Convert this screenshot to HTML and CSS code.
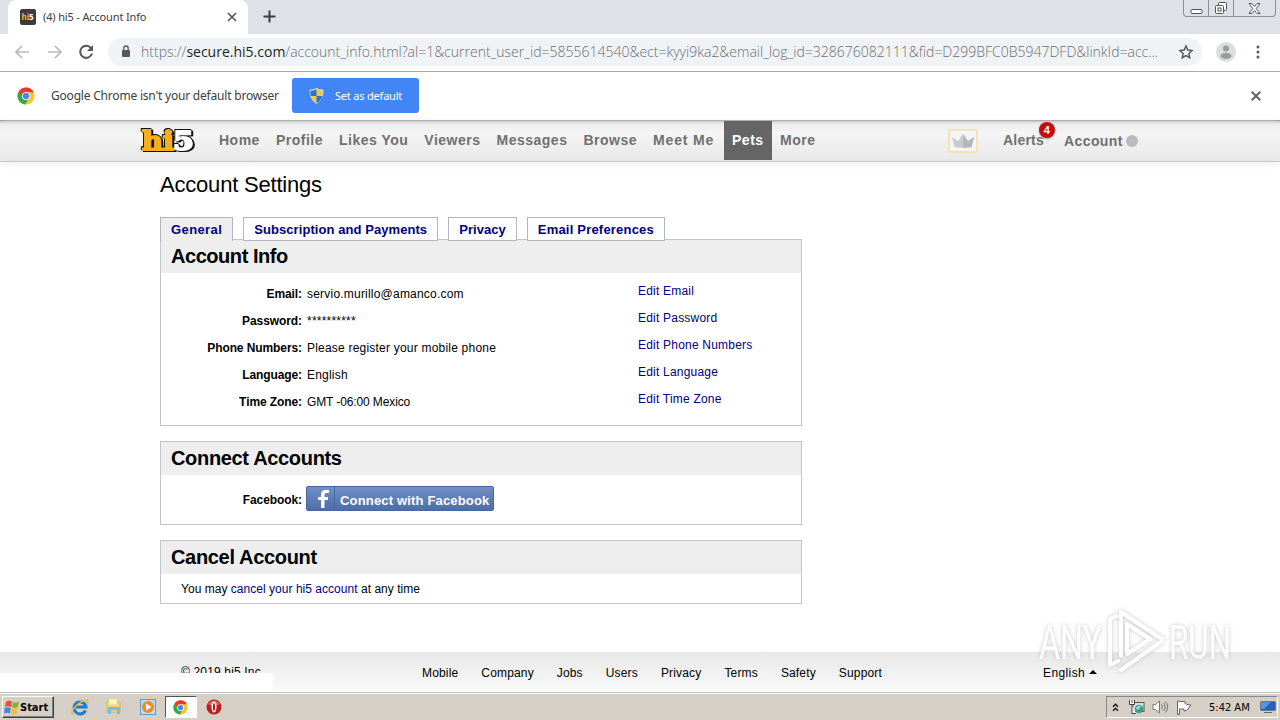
FILE: index.html
```html
<!DOCTYPE html>
<html lang="en">
<head>
    <meta charset="UTF-8">
    <meta name="viewport" content="width=device-width, initial-scale=1.0">
    <title>hi5 - Account Info</title>
    <link rel="stylesheet" href="styles.css">
</head>
<body>
    <svg class="defs" width="0" height="0">
        <symbol id="chrome" viewBox="0 0 20 20">
            <circle cx="10" cy="10" r="9.5" fill="#fbc52d"/>
            <path d="M1.8 5.2A9.5 9.5 0 0 1 18.6 5.8H10L6 12Z" fill="#e33b2e"/>
            <path d="M1.8 5.2A9.5 9.5 0 0 0 9 19.4L13.6 12H6Z" fill="#2da94f"/>
            <circle cx="10" cy="10" r="4.5" fill="#fff"/>
            <circle cx="10" cy="10" r="3.5" fill="#4286f0"/>
        </symbol>
    </svg>

    <!-- Browser window -->
    <div class="tabstrip">
        <div class="browser-tab">
            <svg class="favicon" width="16" height="16" viewBox="0 0 16 16">
                <rect width="16" height="16" rx="2" fill="#3f3b3b"/>
                <text x="1.5" y="11" font-size="8" font-weight="700" fill="#f4b31a">hi<tspan fill="#fff">5</tspan></text>
            </svg>
            <span class="tab-title">(4) hi5 - Account Info</span>
            <svg width="10" height="10" viewBox="0 0 10 10" stroke="#50545a" stroke-width="1.6"><path d="M1 1l8 8M9 1l-8 8"/></svg>
        </div>
        <svg class="new-tab" width="13" height="13" viewBox="0 0 13 13" stroke="#3b3e44" stroke-width="2"><path d="M6.500 .5v12M.5 6.500h12"/></svg>
        <div class="window-buttons">
            <span><svg width="13" height="14" viewBox="0 0 13 14" fill="#fff" stroke="#50555f"><rect x="1" y="8.500" width="11" height="4" rx="1"/></svg></span>
            <span><svg width="14" height="14" viewBox="0 0 14 14" fill="#fff" stroke="#50555f"><rect x="4.500" y="1.500" width="8" height="8" rx="1"/><rect x="1.500" y="4.500" width="8" height="8" rx="1"/><rect x="4" y="7" width="3" height="3"/></svg></span>
            <span><svg width="13" height="11" viewBox="0 0 13 11" fill="#fff" stroke="#50555f"><path d="M1 .5h3l2.500 3 2.500-3h3l-3.800 5 3.800 5H9L6.500 7.500 4 10.500H1l3.800-5z"/></svg></span>
        </div>
    </div>
    <div class="toolbar">
        <svg class="nav-back" width="16" height="14" viewBox="0 0 16 14" fill="none" stroke="#b8babd" stroke-width="1.7"><path d="M15 7H2M8 1L2 7l6 6"/></svg>
        <svg class="nav-forward" width="16" height="14" viewBox="0 0 16 14" fill="none" stroke="#b8babd" stroke-width="1.7"><path d="M1 7h13M8 1l6 6-6 6"/></svg>
        <svg class="nav-reload" width="16" height="16" viewBox="0 0 16 16" fill="none" stroke="#55585c" stroke-width="2"><path d="M13 4.200A6 6 0 1 0 14 9.500"/><path d="M15 1v6H9z" fill="#55585c" stroke="none"/></svg>
        <div class="address">
            <svg class="lock" width="10" height="13" viewBox="0 0 10 13"><rect x="1" y="5" width="8" height="7" rx="1" fill="#55585c"/><path d="M2.800 5V3.200a2.200 2.200 0 0 1 4.400 0V5" fill="none" stroke="#55585c" stroke-width="1.300"/></svg>
            <span class="url">https://<b>secure.hi5.com</b>/account_info.html?al=1&amp;current_user_id=5855614540&amp;ect=kyyi9ka2&amp;email_log_id=328676082111&amp;fid=D299BFC0B5947DFD&amp;linkId=acc...</span>
            <svg class="star" width="16" height="16" viewBox="0 0 16 16" fill="none" stroke="#55585c" stroke-width="1.500"><path d="M8 2l1.800 4 4.200.5-3.100 2.900.8 4.300L8 11.500l-3.700 2.200.8-4.300L2 6.500 6.200 6z"/></svg>
        </div>
        <svg class="avatar" width="20" height="20" viewBox="0 0 20 20"><circle cx="10" cy="10" r="10" fill="#dcdddd"/><circle cx="10" cy="6.500" r="3" fill="#9a9c9e"/><ellipse cx="10" cy="13.800" rx="5.500" ry="3" fill="#9a9c9e"/></svg>
        <svg class="menu" width="4" height="14" viewBox="0 0 4 14" fill="#55585c"><circle cx="2" cy="2" r="1.500"/><circle cx="2" cy="7" r="1.500"/><circle cx="2" cy="12" r="1.500"/></svg>
    </div>
    <div class="infobar">
        <svg class="infobar-logo" width="18" height="18"><use href="#chrome"/></svg>
        <span class="infobar-text">Google Chrome isn't your default browser</span>
        <div class="default-btn">
            <svg width="15" height="16" viewBox="0 0 15 16"><path d="M7.500.5Q10 2 14 2q.5 9-6.500 13.500Q.5 11 1 2q4 0 6.500-1.500z" fill="#f6c944" stroke="#d8dde0"/><path d="M7.500 1.500V8H1.600Q1.300 5 1.500 2.700q3.500 0 6-1.200zM7.500 8h5.800q-1 4.500-5.800 7z" fill="#2b73d2"/></svg>
            <span>Set as default</span>
        </div>
        <svg class="infobar-close" width="10" height="10" viewBox="0 0 10 10" stroke="#606368" stroke-width="2"><path d="M.7.7l8.600 8.600M9.300.7L.7 9.300"/></svg>
    </div>

    <!-- Site header -->
    <div class="site-header">
        <svg class="logo" width="58" height="32" viewBox="0 0 58 32">
            <text class="logo-hi" x="3" y="25" textLength="32" lengthAdjust="spacingAndGlyphs">hi</text>
            <text class="logo-five" x="34" y="25" textLength="21" lengthAdjust="spacingAndGlyphs">5</text>
        </svg>
        <div class="nav">
            <a>Home</a>
            <a>Profile</a>
            <a>Likes You</a>
            <a>Viewers</a>
            <a>Messages</a>
            <a>Browse</a>
            <a class="meet">Meet Me</a>
            <a class="active">Pets</a>
            <a>More</a>
        </div>
        <div class="crown">
            <svg width="22" height="14" viewBox="0 0 22 14" fill="#c9caca"><path d="M0 3l6 4 5-7 5 7 6-4-2.500 10q-8 1.500-17 0z"/><path d="M11 0l5 7 6-4-2.500 10q-4 .8-8.500.9z" fill="#b4b6b8"/></svg>
        </div>
        <div class="alerts">Alerts<span class="badge">4</span></div>
        <div class="account">Account<i class="dot"></i></div>
    </div>

    <!-- Account settings -->
    <div class="content">
        <h1>Account Settings</h1>
        <div class="tabs">
            <a class="tab selected">General</a>
            <a class="tab subscription">Subscription and Payments</a>
            <a class="tab privacy">Privacy</a>
            <a class="tab">Email Preferences</a>
        </div>
        <div class="panel info">
            <h2>Account Info</h2>
            <div class="row"><b>Email:</b><span>servio.murillo@amanco.com</span><a>Edit Email</a></div>
            <div class="row"><b>Password:</b><span>**********</span><a>Edit Password</a></div>
            <div class="row"><b>Phone Numbers:</b><span>Please register your mobile phone</span><a>Edit Phone Numbers</a></div>
            <div class="row"><b>Language:</b><span>English</span><a>Edit Language</a></div>
            <div class="row"><b>Time Zone:</b><span class="zone">GMT -06:00 Mexico</span><a>Edit Time Zone</a></div>
        </div>
        <div class="panel connect">
            <h2>Connect Accounts</h2>
            <div class="row"><b>Facebook:</b>
                <div class="fb-btn">
                    <span class="fb-icon"><svg width="11" height="18" viewBox="0 0 11 18"><path d="M3 18v-8H0V7h3V4.500Q3 0 7.500 0H11v3H8.500Q6.500 3 6.500 5v2H10v3H6.500v8z" fill="#fff"/></svg></span>
                    <span class="fb-label">Connect with Facebook</span>
                </div>
            </div>
        </div>
        <div class="panel cancel">
            <h2>Cancel Account</h2>
            <p>You may <a>cancel your hi5 account</a> at any time</p>
        </div>
    </div>

    <div class="footer">
        <span class="copyright">© 2019 hi5 Inc.</span>
        <div class="footer-links">
            <a>Mobile</a><a>Company</a><a>Jobs</a><a>Users</a><a>Privacy</a><a>Terms</a><a>Safety</a><a>Support</a>
        </div>
        <span class="language">English <i class="arrow"></i></span>
        <div class="status-bubble"></div>
    </div>

    <!-- Windows taskbar -->
    <div class="taskbar">
        <div class="start">
            <svg width="16" height="15" viewBox="0 0 16 15"><path d="M2 2q3-2 6-.5L7 7q-3-1.500-6 0z" fill="#e8512e"/><path d="M9 2q3 1.500 6-.5l-1.200 5.500q-3 1.800-5.800.3z" fill="#78b72f"/><path d="M.8 8q3-1.500 6 0l-1 5.500q-3-1.500-5.800 0z" fill="#3d8ade"/><path d="M7.800 8.300q3 1.500 5.800-.3l-1.200 5.500q-3 1.700-5.700.3z" fill="#f5be2c"/></svg>
            <span>Start</span>
        </div>
        <div class="task-icon">
            <svg width="18" height="18" viewBox="0 0 18 18" fill="none"><path d="M14.500 12.500A6 6 0 1 1 15 9H5" stroke="#1c7cc9" stroke-width="3"/><path d="M2 16Q-1 13 6 7T16.500 2.500q1 1-.5 3" stroke="#e6bd38" stroke-width="1.500"/></svg>
        </div>
        <div class="task-icon">
            <svg width="18" height="18" viewBox="0 0 18 18"><path d="M2 3h5l1 1h7v10H2z" fill="#efd675" stroke="#d8b852"/><path d="M4 1.500h8v5H4z" fill="#fff3b8"/><path d="M3 16V9h12v7h-3v-4H6v4z" fill="#73bde6"/></svg>
        </div>
        <div class="task-icon">
            <svg width="16" height="16" viewBox="0 0 16 16"><rect x=".5" y=".5" width="15" height="15" fill="#bcdcf2" stroke="#5b9dd0"/><circle cx="8" cy="8" r="6" fill="#f18b1b"/><path d="M6 4.500l5.500 3.500L6 11.500z" fill="#fff"/></svg>
        </div>
        <div class="task-icon current"><svg width="15" height="15"><use href="#chrome"/></svg></div>
        <div class="task-icon">
            <svg width="16" height="16" viewBox="0 0 16 16"><circle cx="8" cy="8" r="7.500" fill="#bd1d20"/><path d="M2 5q6-7 12 0-6 3-12 0z" fill="#df7072"/><ellipse cx="8" cy="8" rx="2.500" ry="5.500" fill="#fff"/><ellipse cx="8" cy="8" rx="1" ry="4" fill="#9d1517"/></svg>
        </div>
        <div class="tray">
            <svg class="chevrons" width="7" height="9" viewBox="0 0 7 9" fill="none" stroke="#111" stroke-width="1.300"><path d="M1 3.700L3.500 1.200 6 3.700M1 7.700l2.500-2.500L6 7.700"/></svg>
            <svg class="network" width="17" height="16" viewBox="0 0 17 16"><rect x="5" y="3.500" width="11" height="9" fill="#cfe8e0" stroke="#555"/><path d="M1.500 1v4.500h5V1M4 1v3M4 5.500v9h4" fill="#fff" stroke="#444"/><circle cx="11" cy="10" r="4.300" fill="#3a9d8b"/><path d="M8 9q2-3 5-2l-2 3q-2 2-3-1z" fill="#a6dccb"/></svg>
            <svg class="volume" width="17" height="14" viewBox="0 0 17 14" fill="none" stroke="#777"><path d="M1 4.500h2.500L7.500 1v12L3.500 9.500H1z" fill="#fff"/><path d="M9.500 4.500q2 2.500 0 5M11.500 3q3.500 4 0 8M13.500 1.500q4.500 5.500 0 11"/></svg>
            <svg class="flag" width="16" height="15" viewBox="0 0 16 15" fill="#fff" stroke="#666"><path d="M1.500 1v13.500h2V9H8v2q3 0 4-2 1-2 3-4-3 0-6-1.500V1.500H3.500V1z"/></svg>
            <span class="clock">5:42 AM</span>
            <svg class="desktop" width="16" height="13" viewBox="0 0 16 13"><rect x=".5" y=".5" width="15" height="9" rx="1" fill="#255fc1" stroke="#6c7583"/><path d="M1 1h10L4 8H1z" fill="#5595dd"/><path d="M4 11.500h8" stroke="#667"/></svg>
        </div>
    </div>

    <svg class="watermark" width="230" height="80" viewBox="0 0 230 80">
        <text x="9" y="59" textLength="63" lengthAdjust="spacingAndGlyphs">ANY</text>
        <path d="M80 65V19l7-3M80 65l8-4M91 56V12l41 27M91 70l41-29M97 24v30l23-15z"/>
        <text x="139" y="59" textLength="62" lengthAdjust="spacingAndGlyphs">RUN</text>
    </svg>
</body>
</html>
```
FILE: styles.css
```css
* {
    margin: 0;
    padding: 0;
    box-sizing: border-box;
}

body {
    width: 1280px;
    height: 720px;
    overflow: hidden;
    position: relative;
    display: flex;
    flex-direction: column;
    background: #fff;
    font-family: "Liberation Sans", Arial, sans-serif;
    font-size: 12px;
    color: #000;
}

svg {
    display: block;
    flex-shrink: 0;
}

span, a, b {
    white-space: nowrap;
}

.defs {
    position: absolute;
}

/* browser window */
.tabstrip {
    height: 34px;
    flex-shrink: 0;
    display: flex;
    background: #dee1e7;
    font-family: "Noto Sans", sans-serif;
}

.browser-tab {
    width: 240px;
    margin-left: 8px;
    padding: 0 11px 1px 12px;
    display: flex;
    align-items: center;
    background: #fff;
    border-radius: 8px 8px 0 0;
}

.tab-title {
    flex: 1;
    margin-left: 7px;
    font-size: 11px;
    letter-spacing: -0.15px;
    color: #3d4045;
}

.new-tab {
    margin: 10px 0 0 15px;
}

.window-buttons {
    width: 93px;
    height: 17px;
    margin: 0 4px 0 auto;
    display: flex;
    border: 1px solid #8b8f96;
    border-top: none;
    border-radius: 0 0 4px 4px;
}

.window-buttons span {
    display: flex;
    justify-content: center;
    align-items: center;
    width: 25px;
    border-right: 1px solid #8b8f96;
}

.window-buttons span:last-child {
    flex: 1;
    border: none;
}

.toolbar {
    height: 38px;
    flex-shrink: 0;
    display: flex;
    align-items: center;
    padding: 0 20px 2px 14px;
    border-bottom: 1px solid #a9abae;
    font-family: "Open Sans", sans-serif;
}

.nav-forward {
    margin-left: 17px;
}

.nav-reload {
    margin-left: 15px;
}

.address {
    width: 1094px;
    height: 28px;
    margin-left: 14px;
    padding: 0 8px 0 13px;
    display: flex;
    align-items: center;
    background: #f0f3f5;
    border-radius: 14px;
}

.url {
    flex: 1;
    margin-left: 10px;
    font-size: 14px;
    font-weight: 300;
    color: #6b6e72;
}

.url b {
    font-weight: 400;
    color: #1d1f22;
}

.avatar {
    margin-left: 14px;
}

.menu {
    margin-left: auto;
}

.infobar {
    height: 49px;
    flex-shrink: 0;
    display: flex;
    align-items: center;
    padding: 0 19px 1px 17px;
    border-bottom: 1px solid #8b8b8b;
    font-family: "Noto Sans", sans-serif;
}

.infobar-text {
    width: 228px;
    margin-left: 16px;
    font-size: 12px;
    letter-spacing: -0.2px;
    color: #3b3d40;
}

.default-btn {
    width: 127px;
    height: 35px;
    margin-left: 13px;
    padding-left: 17px;
    display: flex;
    align-items: center;
    gap: 11px;
    background: #4285f4;
    border-radius: 3px;
    color: #fff;
    font-size: 11px;
    letter-spacing: -0.2px;
}

.infobar-close {
    margin-left: auto;
}

/* site header */
.site-header {
    height: 41px;
    flex-shrink: 0;
    display: flex;
    padding-left: 139px;
    background: linear-gradient(#c9c9c9, #ededed 3px, #f5f5f5 12px, #e8e8e8);
    border-bottom: 1px solid #c8c8c8;
    box-shadow: 0 1px 8px #eee;
    color: #707070;
    font-size: 14px;
    font-weight: bold;
    letter-spacing: 0.5px;
}

.logo {
    margin-top: 4px;
    overflow: visible;
    filter: drop-shadow(1px 1px 0 #111) drop-shadow(-1px -1px 0 #111) drop-shadow(1px 0 0 #111);
}

.logo-hi, .logo-five {
    font: bold 26px "DejaVu Serif", serif;
    letter-spacing: 0;
    fill: #f9ae1c;
    stroke: #f9ae1c;
    stroke-width: 2px;
}

.logo-five {
    fill: #fff;
    stroke: #fff;
}

.nav {
    width: 637px;
    margin-left: 14px;
    display: flex;
}

.nav a {
    height: 39px;
    padding: 0 8px;
    line-height: 38px;
}

.nav .meet {
    width: 79px;
    flex-shrink: 0;
    letter-spacing: 0.85px;
}

.nav .active {
    width: 48px;
    background: #656565;
    color: #fff;
}

.crown {
    width: 30px;
    height: 24px;
    margin: 8px 0 0 100px;
    display: flex;
    align-items: center;
    justify-content: center;
    border: 2px solid #f6e2b4;
    border-radius: 3px;
    background: #f5f5f5;
}

.alerts {
    position: relative;
    width: 61px;
    margin-left: 25px;
    letter-spacing: 0.2px;
    line-height: 38px;
}

.badge {
    position: absolute;
    left: 36px;
    top: 1px;
    width: 16px;
    height: 16px;
    border-radius: 50%;
    background: #c30d12;
    box-shadow: 0 1px 2px #999;
    color: #fff;
    font-size: 11px;
    line-height: 16px;
    text-align: center;
}

.account {
    display: flex;
    align-items: center;
    height: 40px;
    letter-spacing: 0.4px;
}

.dot {
    width: 12px;
    height: 12px;
    margin-left: 3px;
    border-radius: 50%;
    background: #bbb;
}

/* account settings */
.content {
    width: 642px;
    height: 490px;
    flex-shrink: 0;
    margin-left: 160px;
}

h1 {
    height: 55px;
    padding-top: 10px;
    font-size: 22px;
    font-weight: normal;
    letter-spacing: -0.2px;
    line-height: 26px;
}

.tabs {
    display: flex;
    gap: 10px;
    height: 22px;
}

.tab {
    position: relative;
    height: 24px;
    padding: 0 10px;
    border: 1px solid #b4b4be;
    background: #fcfdff;
    color: #000080;
    font-size: 13px;
    font-weight: bold;
    letter-spacing: 0.2px;
    line-height: 23px;
}

.tab.selected {
    border-bottom: none;
    background: #eee;
    letter-spacing: 0.4px;
}

.tab.subscription {
    letter-spacing: 0.07px;
}

.tab.privacy {
    letter-spacing: 0.05px;
}

.panel {
    border: 1px solid #c4c4c4;
    margin-bottom: 15px;
}

.panel h2 {
    height: 33px;
    padding-left: 10px;
    background: #eee;
    font-size: 20px;
    letter-spacing: -0.33px;
    line-height: 33px;
}

.info {
    height: 187px;
}

.connect {
    height: 84px;
}

.cancel {
    height: 64px;
}

.row {
    height: 27px;
    display: flex;
    align-items: center;
    letter-spacing: 0.21px;
}

.info h2 {
    margin-bottom: 7px;
    letter-spacing: -0.45px;
}

.row b {
    width: 141px;
    text-align: right;
    letter-spacing: -0.09px;
}

.row span {
    width: 331px;
    margin-left: 5px;
}

.row .zone {
    letter-spacing: -0.12px;
}

.row a {
    padding-bottom: 6px;
}

.panel a {
    color: #000080;
}

.connect .row {
    height: 47px;
}

.connect .row b {
    padding-top: 2px;
}

.row .fb-btn {
    width: 188px;
    height: 25px;
    margin-left: 4px;
    display: flex;
    background: linear-gradient(#728fc5, #4c6eaa);
    border: 1px solid #47679d;
    border-radius: 2px;
    color: #fff;
    font-size: 13px;
    font-weight: bold;
    letter-spacing: 0.17px;
    line-height: 27px;
}

.fb-btn .fb-icon {
    width: 28px;
    flex-shrink: 0;
    margin: 0;
    padding: 3px 0 0 11px;
    border-right: 1px solid #49699f;
}

.fb-btn .fb-label {
    width: auto;
}

.cancel p {
    padding-left: 20px;
    letter-spacing: 0.03px;
    line-height: 30px;
}

/* footer */
.footer {
    position: relative;
    height: 40px;
    flex-shrink: 0;
    display: flex;
    padding-left: 181px;
    background: linear-gradient(#e8e8e8, #fafafa);
    letter-spacing: 0.16px;
    line-height: 42px;
}

.copyright {
    width: 241px;
    line-height: 40px;
}

.footer-links {
    width: 621px;
    display: flex;
    gap: 23px;
}

.language {
    letter-spacing: 0.4px;
    line-height: 43px;
}

.arrow {
    display: inline-block;
    margin-bottom: 3px;
    border: 4px solid transparent;
    border-top: none;
    border-bottom-color: #000;
}

.status-bubble {
    position: absolute;
    left: 0;
    top: 21px;
    width: 273px;
    height: 19px;
    background: #fff;
}

/* taskbar */
.taskbar {
    height: 28px;
    flex-shrink: 0;
    display: flex;
    align-items: flex-start;
    padding: 2px 2px 0;
    background: #d5cfc6;
    border-top: 1px solid #c9c4bb;
    box-shadow: inset 0 1px #fff;
    font-family: "DejaVu Sans Condensed", sans-serif;
}

.start {
    width: 52px;
    height: 22px;
    margin-top: 1px;
    padding-left: 1px;
    display: flex;
    align-items: center;
    border: 1px solid;
    border-color: #fff #404040 #404040 #fff;
    box-shadow: inset -1px -1px #808080;
    font-size: 11px;
    font-weight: bold;
}

.task-icon {
    width: 34px;
    height: 24px;
    display: flex;
    align-items: center;
    justify-content: center;
}

.start + .task-icon {
    margin-left: 9px;
}

.task-icon.current {
    width: 32px;
    height: 22px;
    margin: 1px 0 0;
    padding-right: 2px;
    background: #fff;
    border: 1px solid #555;
    border-right-color: #fff;
    border-bottom-color: #fff;
}

.tray {
    width: 172px;
    height: 22px;
    margin: 1px 0 0 auto;
    padding: 0 1px 0 5px;
    display: flex;
    align-items: center;
    border: 1px solid;
    border-color: #888 #fff #fff #888;
}

.network {
    margin-left: 9px;
}

.volume {
    margin-left: 7px;
}

.flag {
    margin-left: 7px;
}

.clock {
    width: 52px;
    margin-left: 17px;
    font-size: 11px;
}

/* watermark */
.watermark {
    position: absolute;
    left: 1030px;
    top: 600px;
    filter: drop-shadow(0 0 2px #bbb);
    fill: none;
    stroke: #fff;
    stroke-width: 4px;
    stroke-linejoin: round;
    stroke-linecap: round;
    opacity: 0.85;
}

.watermark text {
    font: 49px Roboto, sans-serif;
    fill: #fff;
    stroke-width: 0;
}
```
